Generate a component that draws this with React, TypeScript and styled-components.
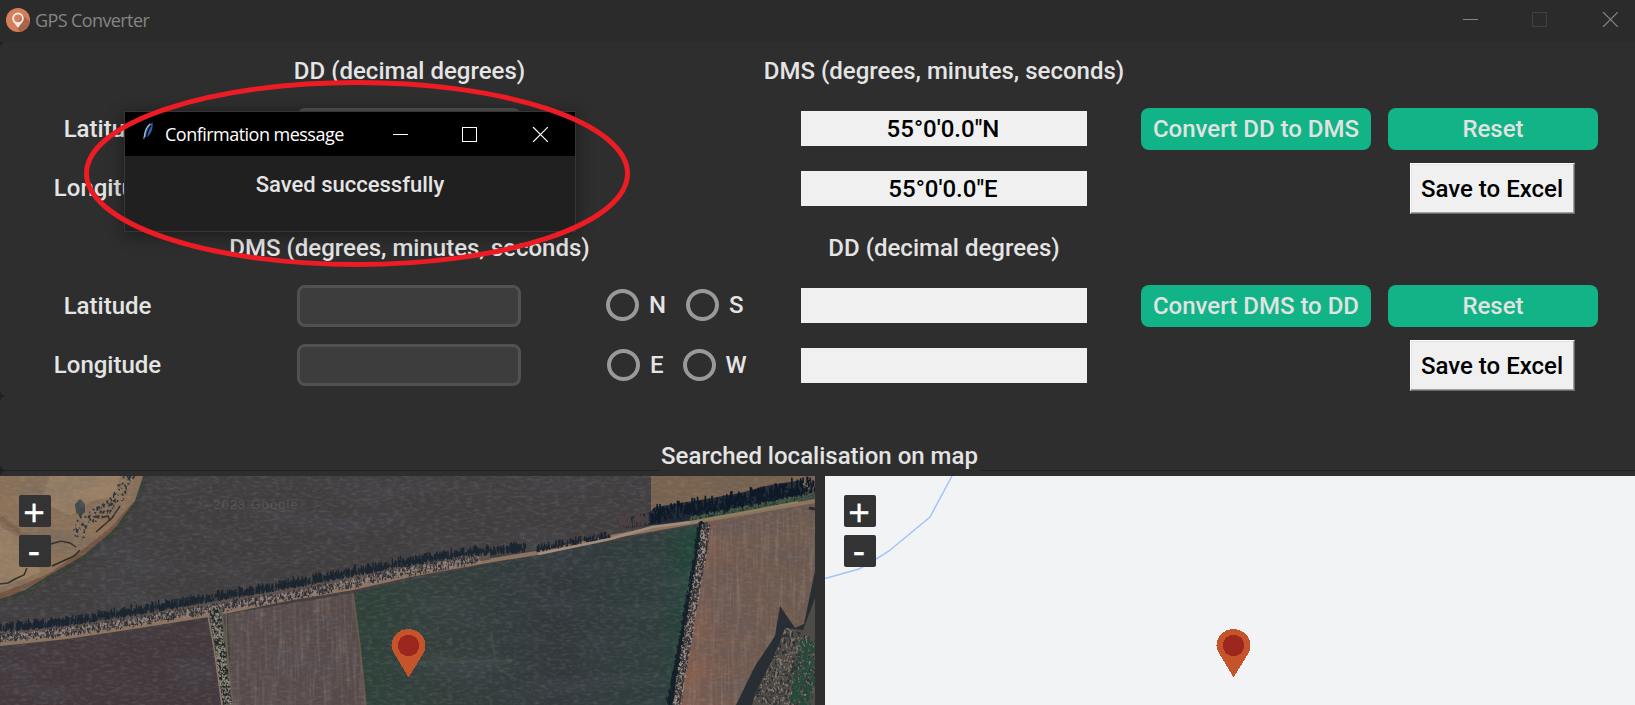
import React from "react";
import styled, { createGlobalStyle } from "styled-components";

const Global = createGlobalStyle`
  html, body { margin: 0; padding: 0; background: #202020; }
  body { width: 1635px; height: 705px; overflow: hidden; }
  * { box-sizing: border-box; }
`;

const Window = styled.div`
  position: relative;
  width: 1635px;
  height: 705px;
  overflow: hidden;
  display: flex;
  flex-direction: column;
  background: #202020;
  color: #e4e4e4;
  font-family: Roboto, "Liberation Sans", sans-serif;
  font-size: 24px;
  font-weight: 500;
`;

const TitleBar = styled.header`
  flex: none;
  height: 42px;
  display: flex;
  align-items: center;
  padding: 0 17px 3px 6px;
  background: #2b2b2b;
  color: #858585;
`;

const AppName = styled.span`
  flex: 1;
  padding: 1px 0 0 5px;
  font: 400 18px/24px "Open Sans", "Noto Sans", sans-serif;
  letter-spacing: -0.6px;
`;

const WindowControls = styled.div`
  display: flex;
  svg { display: block; }
`;

const Panel = styled.main`
  flex: none;
  height: 354px;
  background: #2e2e2e;
  border-radius: 6px 0 0 6px;
`;

const Section = styled.section`
  display: grid;
  grid-template-columns: 217px 385px 199px 286px 54px 230px 17px 210px;
  grid-template-rows: 57px 59px 61px;
`;

const Heading = styled.h2<{ $column: number }>`
  grid-row: 1;
  grid-column: ${(p) => p.$column};
  justify-self: center;
  margin: 0;
  font: inherit;
  line-height: 59px;
  height: 57px;
  white-space: nowrap;
`;

const FieldLabel = styled.label<{ $row: number }>`
  grid-row: ${(p) => p.$row};
  grid-column: 1;
  padding: 9px 2px 0 0;
  line-height: 42px;
  text-align: center;
`;

const Entry = styled.input<{ $row: number }>`
  grid-row: ${(p) => p.$row};
  grid-column: 2;
  width: 224px;
  height: 42px;
  margin: 9px 0 0 80px;
  background: #3d3d3d;
  border: 3px solid #515151;
  border-radius: 8px;
  outline: none;
`;

const RadioGroup = styled.div<{ $row: number; $left: number; $top: number; $gap: number }>`
  grid-row: ${(p) => p.$row};
  grid-column: 3;
  display: flex;
  align-items: flex-start;
  gap: ${(p) => p.$gap}px;
  padding: ${(p) => p.$top}px 0 0 ${(p) => p.$left}px;
`;

const RadioOption = styled.label`
  display: flex;
  align-items: center;
  gap: 10px;
  height: 32px;
  line-height: 34px;
`;

const Ring = styled.span`
  width: 33px;
  height: 32px;
  border: 4px solid #999;
  border-radius: 50%;
`;

const Output = styled.output<{ $row: number }>`
  grid-row: ${(p) => p.$row};
  grid-column: 4;
  height: 35px;
  margin-top: ${(p) => (p.$row === 2 ? 12 : 13)}px;
  padding-right: 2px;
  background: #f0f0f0;
  color: #000;
  line-height: 36px;
  text-align: center;
`;

const ActionButton = styled.button<{ $column: number }>`
  grid-row: 2;
  grid-column: ${(p) => p.$column};
  height: 42px;
  margin: 9px 0 0;
  padding: 0;
  border: 0;
  border-radius: 8px;
  background: #12b386;
  color: #e0e3e1;
  font: inherit;
  white-space: nowrap;
`;

const SaveButton = styled.button`
  grid-row: 3;
  grid-column: 8;
  width: 165px;
  height: 51px;
  margin: 5px 0 0 22px;
  padding: 1px 1px 0 0;
  border: 1px solid;
  border-color: #fff #696969 #696969 #fff;
  box-shadow: inset -1px -1px 0 #a0a0a0, inset 1px 1px 0 #e3e3e3;
  background: #f0f0f0;
  color: #000;
  font: inherit;
  white-space: nowrap;
`;

const CaptionPanel = styled.div`
  flex: none;
  height: 74px;
  display: flex;
  align-items: flex-end;
  justify-content: center;
  padding-left: 4px;
  border-radius: 6px 0 0 6px;
  background: #2e2e2e;
`;

const Caption = styled.h2`
  position: relative;
  width: 320px;
  height: 31px;
  margin: 0 0 -1px;
  background: #2e2e2e;
  font: inherit;
  line-height: 33px;
  text-align: center;
  white-space: nowrap;
`;

const Maps = styled.div`
  flex: 1;
  display: flex;
  gap: 10px;
  margin-top: 1px;
  padding-top: 5px;
  border-radius: 6px 0 0 0;
  background: #2e2e2e;
`;

const MapView = styled.div<{ $width: number }>`
  position: relative;
  width: ${(p) => p.$width}px;
  height: 229px;
  background: #f1f3f5;
  > svg { display: block; }
`;

const ZoomControls = styled.div`
  position: absolute;
  top: 19px;
  left: 19px;
  display: flex;
  flex-direction: column;
  gap: 8px;
`;

const ZoomButton = styled.button<{ $drop: number }>`
  display: flex;
  align-items: center;
  justify-content: center;
  width: 32px;
  height: 32px;
  padding: ${(p) => p.$drop}px 2px 0 0;
  border: 0;
  border-radius: 2px;
  background: #333;
  color: #fff;
  font: 400 37px/28px "Liberation Sans", sans-serif;
  -webkit-text-stroke: 0.3px #fff;
`;

const Dialog = styled.div`
  position: absolute;
  left: 124px;
  top: 111px;
  width: 452px;
  height: 121px;
  border: 1px solid #363636;
  background: #202020;
  box-shadow: 0 3px 16px rgba(0, 0, 0, 0.42);
`;

const DialogBar = styled.div`
  display: flex;
  align-items: center;
  height: 44px;
  padding: 0 27px 0 18px;
  background: #000;
  color: #fff;

  > svg { margin-top: -6px; }
`;

const DialogTitle = styled.span`
  flex: 1;
  padding: 0 0 0 11px;
  font: 400 18px/24px "Open Sans", "Noto Sans", sans-serif;
  letter-spacing: -0.52px;
  white-space: nowrap;
`;

const DialogMessage = styled.p`
  margin: 0;
  padding-top: 12px;
  font-size: 22px;
  line-height: 34px;
  text-align: center;
`;

const Annotation = styled.svg`
  position: absolute;
  left: 80px;
  top: 76px;
  pointer-events: none;
`;

function Controls({ disabled }: { disabled?: boolean }) {
  const main = disabled ? "#858585" : "#fff";
  return (
    <WindowControls>
      <svg width="155" height="15" fill="none" stroke={main}>
        <path d="M0 7.5h15" shapeRendering="crispEdges" />
        <rect
          x="69.5"
          y="0.5"
          width="14"
          height="14"
          stroke={disabled ? "#404040" : main}
          shapeRendering="crispEdges"
        />
        <path d="M140 0l15 15m0-15l-15 15" strokeWidth="1.2" />
      </svg>
    </WindowControls>
  );
}

function AppIcon() {
  return (
    <svg width="24" height="24" viewBox="0 0 24 24">
      <circle cx="12" cy="12" r="12" fill="#d57e5b" />
      <path d="M16 6.500l7.800 7A12 12 0 0 1 14 23.800L11 20z" fill="#a9654b" />
      <path
        fillRule="evenodd"
        d="M12 4.500a5.800 5.800 0 0 0-5.800 5.800C6.200 14 9.500 16 12 20c2.500-4 5.800-6 5.800-9.700A5.800 5.800 0 0 0 12 4.500zm0 1.900a3.900 3.900 0 1 1 0 7.800 3.900 3.900 0 0 1 0-7.800z"
        fill="#f4e9e4"
      />
    </svg>
  );
}

function Feather() {
  return (
    <svg width="11" height="18" viewBox="0 0 11 18">
      <path d="M9.500.5C4.500 3 2 8 1.500 14L3.500 16C7.500 12.500 10.500 7 9.500.5z" fill="#2e5f9e" />
      <path d="M7.200 2C3.500 5 1.500 9 1.500 15" stroke="#a9c4da" strokeWidth="1.200" fill="none" />
      <path d="M8 3.500C5 7 4 11 3.200 17" stroke="#000" strokeWidth="1.200" fill="none" />
      <path d="M.8 17l.8-5" stroke="#9fb8cc" strokeWidth="1" />
    </svg>
  );
}

function Pin({ x }: { x: number }) {
  return (
    <g transform={`translate(${x} 169.500)`} shapeRendering="crispEdges">
      <path
        d="M0 32L-14.500 7.500A17 17 0 0 1-17 0A17 16.500 0 0 1 17 0Q17 4 14.500 8.500Z"
        fill="#c6542b"
      />
      <circle r="10.700" fill="#9c271f" />
    </g>
  );
}

type Pt = [number, number];

function makeRandom(seed: number) {
  let s = seed;
  return () => {
    s = (s * 16807) % 2147483647;
    return s / 2147483647;
  };
}

/* Scatters short dabs along a polyline: tree shadows, shrubs and stones. */
function scatter(
  line: Pt[],
  seed: number,
  density: number,
  spread: number,
  size: [number, number]
): string {
  const rnd = makeRandom(seed * 7919);
  let d = "";
  for (let i = 0; i < line.length - 1; i++) {
    const [ax, ay] = line[i];
    const [bx, by] = line[i + 1];
    const len = Math.hypot(bx - ax, by - ay);
    const nx = -(by - ay) / len;
    const ny = (bx - ax) / len;
    for (let k = 0; k < len * density; k++) {
      const t = rnd();
      const o = (rnd() - 0.5) * spread;
      const x = ax + (bx - ax) * t + nx * o;
      const y = ay + (by - ay) * t + ny * o;
      d += `M${x.toFixed(1)} ${y.toFixed(1)}l${((rnd() - 0.5) * size[0]).toFixed(1)} ${(
        -0.5 -
        rnd() * size[1]
      ).toFixed(1)}`;
    }
  }
  return d;
}

const hedgeLine: Pt[] = [[0, 155], [67, 148], [133, 138], [200, 126], [300, 109], [377, 94], [410, 88], [460, 80], [527, 74]];
const stoneLine: Pt[] = [[0, 163], [67, 157], [133, 147], [210, 134], [300, 119], [377, 103], [410, 96], [480, 84]];
const sideHedge: Pt[] = [[214, 132], [219, 165], [227, 229]];
const rockLine: Pt[] = [[706, 50], [702, 80], [692, 135], [677, 229]];
const rockShade: Pt[] = [[701, 48], [696, 85], [684, 150], [669, 229]];
const treeLine: Pt[] = [[650, 42], [700, 34], [760, 22], [815, 11]];
const grove: Pt[] = [[800, 158], [780, 190], [765, 229]];
const creek: Pt[] = [[128, 0], [122, 18], [106, 34], [82, 46], [77, 62]];

function Satellite() {
  return (
    <svg width="815" height="229" viewBox="0 0 815 229">
      <defs>
        <filter id="grain" x="0" y="0" width="100%" height="100%">
          <feTurbulence type="fractalNoise" baseFrequency="0.15 0.35" numOctaves="3" seed="4" />
          <feColorMatrix values="0 0 0 0 0.6  0 0 0 0 0.54  0 0 0 0 0.5  1.6 0 0 0 -0.72" />
        </filter>
        <filter id="patches" x="0" y="0" width="100%" height="100%">
          <feTurbulence type="fractalNoise" baseFrequency="0.012 0.05" numOctaves="4" seed="11" />
          <feColorMatrix values="0 0 0 0 0.08  0 0 0 0 0.09  0 0 0 0 0.12  0 1.5 0 0 -0.6" />
        </filter>
        <filter id="rows" x="0" y="0" width="100%" height="100%">
          <feTurbulence type="fractalNoise" baseFrequency="0.3 0.02" numOctaves="3" seed="7" />
          <feColorMatrix values="0 0 0 0 0.7  0 0 0 0 0.6  0 0 0 0 0.55  1.3 0 0 0 -0.58" />
        </filter>
        <linearGradient id="green" x1="0" x2="1">
          <stop offset="0" stopColor="#2e4139" />
          <stop offset="0.25" stopColor="#343f3c" />
          <stop offset="0.6" stopColor="#32393c" />
          <stop offset="0.88" stopColor="#303d3c" />
          <stop offset="1" stopColor="#1f4537" />
        </linearGradient>
        <linearGradient id="east" x1="0" x2="1">
          <stop offset="0" stopColor="#865f4d" />
          <stop offset="0.35" stopColor="#70594f" />
          <stop offset="1" stopColor="#6d5a4e" />
        </linearGradient>
        <clipPath id="striped">
          <path d="M228 138L353 117 366 229H232zM712 50L815 29V110L785 158 735 229H687z" />
        </clipPath>
        <clipPath id="groveClip">
          <path d="M815 122L803 154 785 152 775 178 755 218 752 229H815z" />
        </clipPath>
      </defs>
      <rect width="815" height="229" fill="#413e3f" />
      <path d="M0 0H143L135 25 112 53 85 77 50 98 25 114 0 121z" fill="#8b7259" />
      <path d="M0 50L24 65 41 96 0 112zM50 0H120L115 20 92 25 70 40 40 25z" fill="#9a8064" />
      <path d="M134 25L112 50 85 72 50 97 27 107 0 117V125L25 113 51 98 86 79 113 56z" fill="#755441" />
      <path d="M0 42L22 58 32 64" stroke="#7c5c49" strokeWidth="5" fill="none" opacity="0.6" />
      <path d="M146 0L137 27 113 57 86 80 51 101 25 117 0 125" stroke="#363f37" strokeWidth="4" fill="none" />
      <path d="M0 108l8-1 7-4 9-4 3-7M51 68l10-3 9 2 6 4M88 40l12 2 8-2 2 5M52 90l22-10 6-6M96 56l16-14 8-12" stroke="#302a24" strokeWidth="1.500" fill="none" />
      <path d={scatter(creek, 17, 1.2, 11, [5, 3])} stroke="#2b3136" strokeWidth="1.800" />
      <path d={scatter(creek, 31, 1.3, 14, [4, 2])} stroke="#8c7967" strokeWidth="1.300" />
      <path d="M75 28l5-5 5 5v8l-4 4-5-3z" fill="#2c3b3e" opacity="0.8" />
      <path d="M0 172L67 164 133 154 207 142 214 175 222 229H0z" fill="#43393c" />
      <path d="M228 138L353 117 360 170 366 229H232z" fill="#574b4a" />
      <path d="M353 117L410 104 493 87 543 78 610 65 698 49 697 80 684 150 667 229H366L360 170z" fill="url(#green)" />
      <path d="M708 45L815 25V229H680L695 140 708 70z" fill="url(#east)" />
      <path d="M651 0H815V12L651 38z" fill="#79634f" />
      <rect width="815" height="229" filter="url(#patches)" opacity="0.4" />
      <rect width="815" height="229" filter="url(#grain)" opacity="0.2" />
      <g clipPath="url(#striped)">
        <rect width="815" height="229" filter="url(#rows)" opacity="0.28" />
      </g>
      <path d="M410 191l12-5 16 1 20-2 28 0 26 0M491 155l5 35 20 14M438 183l25 1" stroke="#58705a" strokeWidth="3" fill="none" opacity="0.2" />
      <path d="M0 54q35-10 70-15M150 22l70-8M155 65l160-29M120 90l150-30M180 105l190-42M350 25l160-20M380 58l180-32" stroke="#625b58" fill="none" opacity="0.25" />

      <path d="M0 168L67 161 133 151 208 139 219 137 287 123 353 112 410 99 493 84 543 76 610 61 700 45 815 25" stroke="#8d7460" strokeWidth="4" fill="none" />
      <path d="M0 160L67 154 133 144 207 131 300 115 410 92 490 79" stroke="#5c534f" strokeWidth="9" fill="none" />
      <path d={scatter(hedgeLine, 5, 2.6, 5, [1, 7])} stroke="#1b2530" strokeWidth="1.300" />
      <path d={scatter(stoneLine, 9, 3, 7, [2, 2])} stroke="#93837c" strokeWidth="1.300" />
      <path d={scatter(stoneLine, 19, 1.8, 9, [2, 3])} stroke="#303136" strokeWidth="1.100" />
      <path d={scatter([[537, 75], [610, 62]], 29, 2, 4, [1, 6])} stroke="#1b2530" strokeWidth="1.300" />
      <path d="M538 78L610 63 652 51 700 45" stroke="#a58d7d" strokeWidth="2.500" fill="none" />

      <path d="M209 134L222 132 227 165 233 229H221L215 170z" fill="#5c5c50" />
      <path d={scatter(sideHedge, 41, 5, 9, [3, 3])} stroke="#22292b" strokeWidth="1.400" />
      <path d={scatter(sideHedge, 43, 3, 10, [2, 2])} stroke="#918b7b" strokeWidth="1.200" />
      <path d="M208 139L214 172 222 229" stroke="#8b7568" strokeWidth="1.500" fill="none" />
      <path d="M226 138l1 35 6 56M353 117l7 53 6 59" stroke="#745f51" strokeWidth="1.500" fill="none" opacity="0.8" />

      <path d="M620 44L650 36 655 31 700 24 740 17 770 9 803 4V24L760 32 700 43 620 53z" fill="#1a2430" opacity="0.85" />
      <path d={scatter(treeLine, 51, 3, 13, [1, 7])} stroke="#0e1928" strokeWidth="1.600" />
      <path d={scatter([[690, 44], [740, 35], [815, 20]], 53, 3, 5, [2, 2])} stroke="#445744" strokeWidth="1.500" />
      <path d={scatter([[620, 51], [650, 44]], 59, 3, 10, [1, 8])} stroke="#4c4141" strokeWidth="1.300" />
      <path d="M690 46L740 37 798 26" stroke="#8c8262" strokeWidth="2" fill="none" />
      <path d="M809 32l6 1" stroke="#302a2a" strokeWidth="3" />

      <path d="M702 48L697 85 685 150 670 229" stroke="#18262b" strokeWidth="5" fill="none" />
      <path d={scatter(rockShade, 61, 3, 5, [3, 4])} stroke="#142029" strokeWidth="1.300" />
      <path d={scatter(rockLine, 63, 5, 8, [2, 2])} stroke="#9c908d" strokeWidth="1.300" />
      <path d={scatter(rockLine, 67, 3, 8, [2, 2])} stroke="#34302f" strokeWidth="1.200" />

      <path d="M815 95L804 148 795 152 780 130 775 160 755 190 736 229H815z" fill="#222a31" opacity="0.92" />
      <path d="M815 122L803 154 785 152 775 178 755 218 752 229H815z" fill="#4f4b47" />
      <g clipPath="url(#groveClip)">
        <path d={scatter(grove, 71, 10, 80, [3, 3])} stroke="#2a3032" strokeWidth="1.400" />
        <path d={scatter(grove, 73, 8, 80, [3, 2])} stroke="#85796d" strokeWidth="1.200" />
        <path d={scatter([[812, 165], [800, 229]], 77, 5, 22, [3, 3])} stroke="#234a3b" strokeWidth="1.800" />
      </g>
      <text x="198" y="33" fill="#7a7a80" opacity="0.35" fontFamily="Liberation Sans" fontSize="13" letterSpacing="1">
        © 2023 Google
      </text>
      <Pin x={408.5} />
    </svg>
  );
}

function Zoom() {
  return (
    <ZoomControls>
      <ZoomButton $drop={4}>+</ZoomButton>
      <ZoomButton $drop={0}>-</ZoomButton>
    </ZoomControls>
  );
}

export default function App() {
  return (
    <>
      <Global />
      <Window>
        <TitleBar>
          <AppIcon />
          <AppName>GPS Converter</AppName>
          <Controls disabled />
        </TitleBar>
        <Panel>
          <Section>
            <Heading $column={2}>DD (decimal degrees)</Heading>
            <Heading $column={4}>DMS (degrees, minutes, seconds)</Heading>
            <FieldLabel $row={2}>Latitude</FieldLabel>
            <Entry $row={2} />
            <Output $row={2}>55°0'0.0"N</Output>
            <ActionButton $column={6}>Convert DD to DMS</ActionButton>
            <ActionButton $column={8}>Reset</ActionButton>
            <FieldLabel $row={3}>Longitude</FieldLabel>
            <Entry $row={3} />
            <Output $row={3}>55°0'0.0"E</Output>
            <SaveButton>Save to Excel</SaveButton>
          </Section>
          <Section>
            <Heading $column={2}>DMS (degrees, minutes, seconds)</Heading>
            <Heading $column={4}>DD (decimal degrees)</Heading>
            <FieldLabel $row={2}>Latitude</FieldLabel>
            <Entry $row={2} />
            <RadioGroup $row={2} $left={4} $top={13} $gap={20}>
              <RadioOption><Ring />N</RadioOption>
              <RadioOption><Ring />S</RadioOption>
            </RadioGroup>
            <Output $row={2} />
            <ActionButton $column={6}>Convert DMS to DD</ActionButton>
            <ActionButton $column={8}>Reset</ActionButton>
            <FieldLabel $row={3}>Longitude</FieldLabel>
            <Entry $row={3} />
            <RadioGroup $row={3} $left={5} $top={14} $gap={19}>
              <RadioOption><Ring />E</RadioOption>
              <RadioOption><Ring />W</RadioOption>
            </RadioGroup>
            <Output $row={3} />
            <SaveButton>Save to Excel</SaveButton>
          </Section>
        </Panel>
        <CaptionPanel>
          <Caption>Searched localisation on map</Caption>
        </CaptionPanel>
        <Maps>
          <MapView $width={815}>
            <Satellite />
            <Zoom />
          </MapView>
          <MapView $width={810}>
            <svg width="810" height="229" viewBox="0 0 810 229">
              <path d="M0 102.500L34 93 48 85 64 75 105 41 127 0" fill="none" stroke="#a1c4fb" strokeWidth="1.500" />
              <Pin x={408.5} />
            </svg>
            <Zoom />
          </MapView>
        </Maps>
        <Dialog>
          <DialogBar>
            <Feather />
            <DialogTitle>Confirmation message</DialogTitle>
            <Controls />
          </DialogBar>
          <DialogMessage>Saved successfully</DialogMessage>
        </Dialog>
        <Annotation width="554" height="195" fill="none" stroke="#ed1c24" strokeWidth="5">
          <ellipse cx="277" cy="97.500" rx="270.500" ry="91" />
        </Annotation>
      </Window>
    </>
  );
}
